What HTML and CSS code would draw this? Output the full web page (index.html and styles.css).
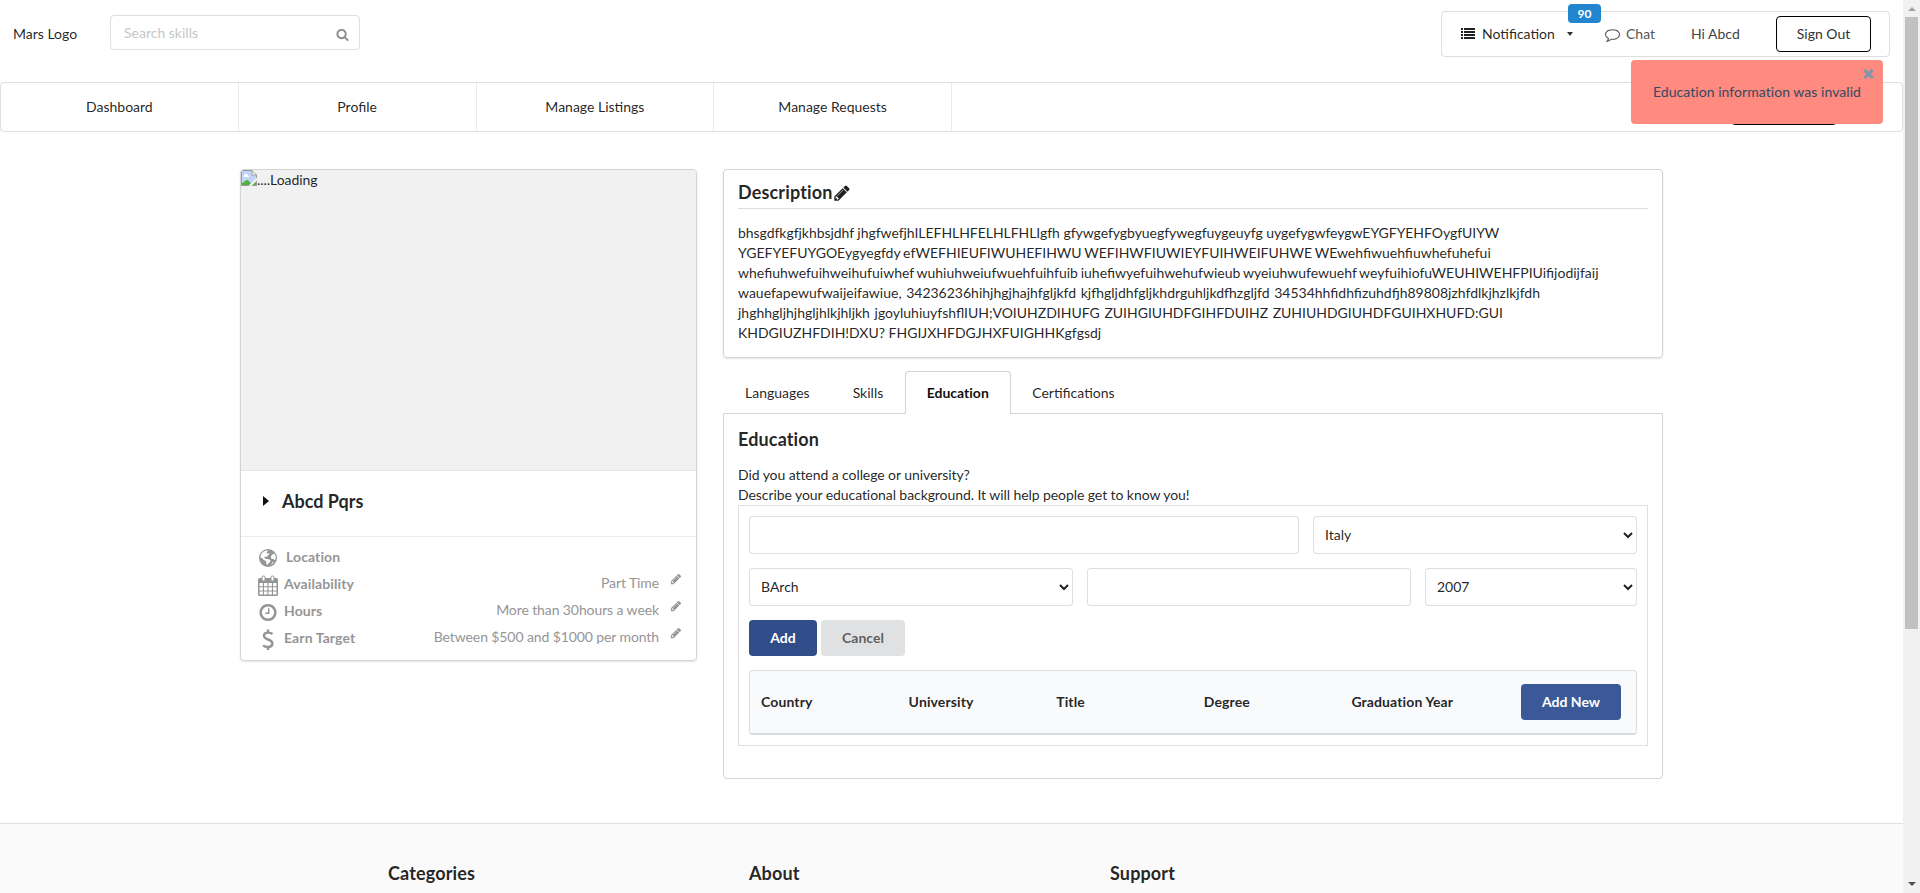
FILE: index.html
```
<!DOCTYPE html>
<html lang="en">
<head>
<meta charset="utf-8">
<title>Profile</title>
<link rel="stylesheet" href="styles.css">
</head>
<body>
<svg class="defs" width="0" height="0">
  <symbol id="pencil" viewBox="0 0 1792 1792"><path d="M491 1536l91-91-235-235-91 91v107h128v128h107zm523-928q0-22-22-22-10 0-17 7l-542 542q-7 7-7 17 0 22 22 22 10 0 17-7l542-542q7-7 7-17zm-54-192l416 416-832 832h-416v-416zm683 96q0 53-37 90l-166 166-416-416 166-165q36-38 90-38 53 0 91 38l235 234q37 39 37 91z"/></symbol>
</svg>
<div class="window">
<div class="page">
  <header class="topbar">
    <span class="logo">Mars Logo</span>
    <div class="search"><span>Search skills</span>
      <svg width="13" height="13" viewBox="0 0 1792 1792"><path d="M1216 832q0-185-131.5-316.5t-316.5-131.5-316.5 131.5-131.5 316.5 131.5 316.5 316.5 131.5 316.5-131.5 131.5-316.5zm512 832q0 52-38 90t-90 38q-54 0-90-38l-343-342q-179 124-399 124-143 0-273.5-55.5t-225-150-150-225-55.5-273.5 55.5-273.5 150-225 225-150 273.5-55.5 273.5 55.5 225 150 150 225 55.5 273.5q0 220-124 399l343 343q37 37 37 90z"/></svg>
    </div>
    <div class="account">
      <div class="notification">
        <svg width="14" height="12" viewBox="0 0 14 12"><path d="M0 0h2v2H0zM3 0h11v2H3zM0 3h2v2H0zM3 3h11v2H3zM0 6h2v2H0zM3 6h11v2H3zM0 9h2v2H0zM3 9h11v2H3z"/></svg>
        <span>Notification</span>
        <i class="caret-down"></i>
        <b class="badge">90</b>
      </div>
      <div class="chat">
        <svg width="15" height="15" viewBox="0 0 1792 1792"><path d="M896 384q-204 0-381.5 69.5t-282 187.5-104.5 255q0 112 71.5 213.5t201.5 175.5l87 50-27 96q-24 91-70 172 152-63 275-171l43-38 57 6q69 8 130 8 204 0 381.5-69.5t282-187.5 104.5-255-104.5-255-282-187.5-381.5-69.5zm896 512q0 174-120 321.5t-326 233-450 85.5q-70 0-145-8-198 175-460 242-49 14-114 22h-5q-15 0-27-10.5t-16-27.5v-1q-3-4-.5-12t2-10 4.5-9.5l6-9 7-8.5 8-9q7-8 31-34.5t34.5-38 31-39.5 32.5-51 27-59 26-76q-157-89-247.5-220t-90.5-281q0-174 120-321.5t326-233 450-85.5 450 85.5 326 233 120 321.5z"/></svg>
        <span>Chat</span>
      </div>
      <span class="greeting">Hi Abcd</span>
      <button class="signout">Sign Out</button>
    </div>
  </header>

  <nav class="nav">
    <a>Dashboard</a><a>Profile</a><a>Manage Listings</a><a>Manage Requests</a>
    <div class="nav-action"></div>
  </nav>

  <main class="content">
    <section class="card profile">
      <div class="photo">
        <svg width="16" height="16" viewBox="0 0 16 16"><path fill="#fff" d="M0 0h11l5 5v11H0z"/><path fill="#c1d3f7" d="M1 1h10v4h4v10H1z"/><path fill="#fff" d="M3 6c0-3 4-3 4 0 2 0 2 1 1 1H3c-1-1-1-1 0-1z"/><path fill="#53b13b" d="M1 15v-2c2 0 3-3 5-3s2 2 4 3l-2 2zM11 15l4-4v4z"/><path fill="none" stroke="#9b9b9b" d="M.5 16V.5h10.500l4.500 4.500V16M0 15.500h16M11 .5V5h4.500"/><path stroke="#f1f1f1" stroke-width="2" d="M8.500 16.500l8-8"/></svg><span>....Loading</span>
      </div>
      <div class="name"><i class="caret-right"></i><h3>Abcd Pqrs</h3></div>
      <ul class="facts">
        <li class="location">
          <svg class="fact-icon" width="20" height="20" viewBox="0 0 20 20"><circle cx="10" cy="10" r="9"/><path fill="#fff" d="M6.300 3.200C3.500 4.600 2.400 7 2.300 9.500l1.700.4 1.800 2 2.200 1.200.3 2.400 1.200 1.700c.6-1 .8-2 2-2.600.5-1 1.300-1.600.8-2.600L9.800 11 7.600 11 6.200 9.400l1.700-1.100 1.200.9.5-1.600 1.800-1.700-.8-.9-1.500.8-.6-1.500 1.800-1.600-1.800-.3zM16.500 5.700l-2.700 1-1 2.200.8 2 2 .1 1 1.200.8-.7c.8-2.200.3-4.400-.9-5.800zM14.500 14.200l-1.600 2.600c1.400-.6 2.500-1.700 3-2.800z"/></svg>
          <b>Location</b>
        </li>
        <li>
          <svg class="fact-icon" width="20" height="22" viewBox="0 0 20 22"><path d="M2 3h16.500q1.500 0 1.500 1.500v15q0 1.500-1.500 1.500h-17Q0 21 0 19.500v-15Q0 3 2 3z"/><path fill="#fff" d="M1.500 8h3.400v3.200H1.500zM6 8h3.400v3.200H6zM10.500 8h3.400v3.200h-3.400zM15 8h3.500v3.200H15zM1.500 12.200h3.400v3.300H1.500zM6 12.200h3.400v3.300H6zM10.500 12.200h3.400v3.300h-3.400zM15 12.200h3.500v3.300H15zM1.500 16.500h3.400v3H1.500zM6 16.500h3.400v3H6zM10.500 16.500h3.400v3h-3.400zM15 16.500h3.500v3H15z"/><rect x="4" y="1" width="3" height="5" rx="1.300" fill="#fff" stroke="#959595"/><rect x="13" y="1" width="3" height="5" rx="1.300" fill="#fff" stroke="#959595"/></svg>
          <b>Availability</b><span>Part Time</span><svg class="edit" width="12" height="12"><use href="#pencil"/></svg>
        </li>
        <li>
          <svg class="fact-icon" width="21" height="21" viewBox="0 0 1792 1792"><path d="M1024 544v448q0 14-9 23t-23 9h-320q-14 0-23-9t-9-23v-64q0-14 9-23t23-9h224v-352q0-14 9-23t23-9h64q14 0 23 9t9 23zm416 352q0-148-73-273t-198-198-273-73-273 73-198 198-73 273 73 273 198 198 273 73 273-73 198-198 73-273zm224 0q0 209-103 385.500t-279.500 279.500-385.500 103-385.500-103-279.500-279.500-103-385.500 103-385.500 279.500-279.500 385.500-103 385.500 103 279.500 279.500 103 385.500z"/></svg>
          <b>Hours</b><span>More than 30hours a week</span><svg class="edit" width="12" height="12"><use href="#pencil"/></svg>
        </li>
        <li>
          <svg class="fact-icon stroked" width="20" height="22" viewBox="0 0 20 22"><path d="M10 .5v3M10 18v3M14.500 5C12 3 6 2.800 6 6.700c0 4.600 8.400 3 8.400 7.800 0 4.300-6.400 4.300-9.400 1.800"/></svg>
          <b>Earn Target</b><span>Between $500 and $1000 per month</span><svg class="edit" width="12" height="12"><use href="#pencil"/></svg>
        </li>
      </ul>
    </section>

    <div class="details">
      <section class="card description">
        <h3>Description<svg width="18" height="18"><use href="#pencil"/></svg></h3>
        <p><span class="snug">bhsgdfkgfjkhbsjdhf jhgfwefjhILEFHLHFELHLFHLIgfh gfywgefygbyuegfywegfuygeuyfg uygefygwfeygwEYGFYEHFOygfUIYW</span><br><span class="close">YGEFYEFUYGOEygyegfdy efWEFHIEUFIWUHEFIHWU WEFIHWFIUWIEYFUIHWEIFUHWE WEwehfiwuehfiuwhefuhefui<br>whefiuhwefuihweihufuiwhef wuhiuhweiufwuehfuihfuib iuhefiwyefuihwehufwieub wyeiuhwufewuehf weyfuihiofuWEUHIWEHFPIUifijodijfaij</span><br><span class="wide">wauefapewufwaijeifawiue, 34236236hihjhgjhajhfgljkfd kjfhgljdhfgljkhdrguhljkdfhzgljfd 34534hhfidhfizuhdfjh89808jzhfdlkjhzlkjfdh<br>jhghhgljhjhgljhlkjhljkh jgoyluhiuyfshflIUH;VOIUHZDIHUFG ZUIHGIUHDFGIHFDUIHZ ZUHIUHDGIUHDFGUIHXHUFD:GUI</span><br>KHDGIUZHFDIH!DXU? FHGIJXHFDGJHXFUIGHHKgfgsdj</p>
      </section>

      <div class="tabs"><a>Languages</a><a>Skills</a><a class="active">Education</a><a>Certifications</a></div>
      <section class="panel">
        <h3>Education</h3>
        <p>Did you attend a college or university?<br>Describe your educational background. It will help people get to know you!</p>
        <div class="form">
          <div class="row row-one">
            <input type="text">
            <select><option>Italy</option></select>
          </div>
          <div class="row row-two">
            <select><option>BArch</option></select>
            <input type="text">
            <select><option>2007</option></select>
          </div>
          <div class="buttons"><button class="btn add">Add</button><button class="btn cancel">Cancel</button></div>
          <div class="table">
            <b>Country</b><b>University</b><b>Title</b><b>Degree</b><b>Graduation Year</b><button class="btn add-new">Add New</button>
          </div>
        </div>
      </section>
    </div>
  </main>

  <footer class="footer"><h3>Categories</h3><h3>About</h3><h3>Support</h3></footer>

  <div class="toast">Education information was invalid
    <svg width="15" height="15" viewBox="0 0 1792 1792"><path d="M1490 1322q0 40-28 68l-136 136q-28 28-68 28t-68-28l-294-294-294 294q-28 28-68 28t-68-28l-136-136q-28-28-28-68t28-68l294-294-294-294q-28-28-28-68t28-68l136-136q28-28 68-28t68 28l294 294 294-294q28-28 68-28t68 28l136 136q28 28 28 68t-28 68l-294 294 294 294q28 28 28 68z"/></svg>
  </div>
</div>
<div class="scrollbar">
  <i class="arrow up"></i>
  <div class="thumb"></div>
  <i class="arrow down"></i>
</div>
</div>
</body>
</html>
```
FILE: styles.css
```
* { box-sizing: border-box; }
body { margin: 0; overflow: hidden; font: 14px/20px Lato, "Liberation Sans", sans-serif; color: rgba(0,0,0,.87); background: #fff; }
h3, p, ul { margin: 0; padding: 0; }
h3 { font-size: 18px; line-height: 23px; font-weight: 700; letter-spacing: .14px; }
button, input, select { font: inherit; color: inherit; }
svg { display: block; flex: none; fill: currentColor; }
.defs { position: absolute; }
.window { display: flex; height: 893px; }
.page { position: relative; flex: 1; min-width: 0; display: flex; flex-direction: column; overflow: hidden; }

.topbar { display: flex; height: 82px; padding: 11px 13px 0 13px; align-items: flex-start; }
.logo { width: 97px; padding-top: 13px; }
.search { display: flex; align-items: center; justify-content: space-between; width: 250px; height: 35px; margin-top: 4px; padding: 0 10px 0 13px; border: 1px solid rgba(34,36,38,.15); border-radius: 4px; color: #c7c7c7; }
.search svg { color: #8c8c8c; margin-top: 4px; }
.account { display: flex; align-items: center; width: 449px; height: 46px; margin-left: auto; padding: 0 18px 0 19px; border: 1px solid rgba(34,36,38,.15); border-radius: 4px; }
.notification { position: relative; display: flex; align-items: center; width: 144px; }
.notification span { margin-left: 7px; }
.caret-down { margin-left: 12px; border: 4px solid transparent; border-top-color: #333; border-bottom: 0; border-left-width: 3.500px; border-right-width: 3.500px; }
.badge { position: absolute; left: 107px; top: -20px; width: 33px; height: 19px; border-radius: 4px; background: #2185d0; color: #fff; font-size: 12px; line-height: 19px; text-align: center; }
.chat { display: flex; align-items: center; gap: 6px; width: 86px; color: #555; }
.greeting { color: #444; }
.signout { width: 95px; height: 36px; margin-left: auto; padding: 0; border: 1px solid #000; border-radius: 4px; background: #fff; color: #333; }

.nav { display: flex; flex: none; height: 50px; border: 1px solid rgba(34,36,38,.15); border-radius: 4px; }
.nav a { width: 237.750px; border-right: 1px solid rgba(34,36,38,.1); line-height: 48px; text-align: center; }
.nav-action { width: 106px; height: 36px; margin: 6px 65px 0 auto; border: 1px solid #000; border-radius: 4px; }

.content { display: flex; gap: 26px; align-items: flex-start; flex: none; height: 691px; padding: 37px 240px 0; }
.card { border: 1px solid #d4d4d5; border-radius: 4px; box-shadow: 0 1px 2px rgba(34,36,38,.12); }
.profile { width: 457px; height: 492px; overflow: hidden; }
.photo { display: flex; height: 301px; background: #f1f1f1; border-bottom: 1px solid #e5e5e5; }
.photo span { letter-spacing: -.05px; }
.name { display: flex; height: 66px; padding: 19px 22px 0; border-bottom: 1px solid #ececec; }
.name h3 { letter-spacing: 0; }
.caret-right { width: 0; height: 0; margin: 6px 13px 0 0; border: 5px solid transparent; border-left: 6px solid #111; border-right: 0; }
.facts { list-style: none; padding: 12px 14px 0 17px; color: #959595; }
.facts li { display: flex; height: 27px; }
.facts b { margin: -2px auto 0 6px; line-height: 20px; font-weight: 700; letter-spacing: .1px; }
.facts .location b { margin-left: 8px; }
.facts span { margin-top: -3px; letter-spacing: -.1px; }
.facts .edit { margin: 0 0 0 11px; }
.facts li .edit { margin-top: -3px; }
.fact-icon { width: 20px; margin-top: -1px; }
.stroked { fill: none; stroke: currentColor; stroke-width: 2.400px; }

.details { flex: 1; min-width: 0; }
.description { height: 189px; padding: 11px 14px; }
.description h3 { display: flex; height: 28px; border-bottom: 1px solid #dcddde; }
.description h3 svg { margin: 3px 0 0 1px; }
.description p { padding-top: 14px; white-space: nowrap; }
.snug { letter-spacing: -.045px; }
.close { word-spacing: -.8px; }
.wide { word-spacing: 1px; }
.tabs { display: flex; height: 43px; margin: 13px 0 -1px; position: relative; }
.tabs a { padding: 0 21.500px; line-height: 43px; }
.tabs a:first-child { padding-left: 22px; }
.tabs .active { width: 106px; padding: 0; border: 1px solid #d4d4d5; border-bottom: 0; border-radius: 4px 4px 0 0; background: #fff; line-height: 41px; text-align: center; font-weight: 700; color: rgba(0,0,0,.95); font-variant-ligatures: none; }
.panel { height: 366px; padding: 14px; border: 1px solid #d4d4d5; border-radius: 0 0 4px 4px; }
.panel p { margin: 14px 0 0; letter-spacing: -.075px; }
.form { height: 241px; padding: 10px; border: 1px solid #e0e0e1; }
.row { display: grid; gap: 14px; margin-bottom: 14px; }
.row-one { grid-template-columns: 550px 324px; }
.row-two { grid-template-columns: 324px 324px 212px; }
.row input, .row select { width: 100%; height: 38px; padding: 0 0 1px 7px; border: 1px solid rgba(34,36,38,.15); border-radius: 4px; background: #fff; outline: 0; }
.buttons { display: flex; gap: 4px; margin-bottom: 14px; }
.btn { height: 36px; padding: 0; border: 0; border-radius: 4px; font-weight: 700; }
.add { width: 68px; background: #304d8a; color: #fff; }
.cancel { width: 84px; background: #e0e1e2; color: rgba(0,0,0,.6); }
.table { display: grid; grid-template-columns: repeat(5, 147.600px) 1fr; align-items: center; height: 65px; padding: 0 15px 0 11px; border: 1px solid #dcddde; border-bottom: 2px solid #d9dadb; border-radius: 4px; background: #f9fafb; letter-spacing: .12px; }
.add-new { width: 100px; justify-self: end; background: #3b5998; color: #fff; }

.footer { flex: 1; display: grid; grid-template-columns: 361px 361px 361px; padding: 38px 388px 0; border-top: 1px solid #e0e0e1; background: #fafafa; }

.toast { position: absolute; left: 1631px; top: 60px; width: 252px; height: 64px; border-radius: 4px; background: #ff8a80; color: #34495e; line-height: 64px; text-align: center; letter-spacing: .05px; }
.toast svg { position: absolute; right: 7px; top: 6px; color: #8296ad; }

.scrollbar { width: 17px; display: flex; flex-direction: column; align-items: center; background: #f1f1f1; }
.thumb { width: 13px; height: 612px; background: #c1c1c1; }
.arrow { border: 4px solid transparent; }
.up { margin: 7px 0 6px; border-bottom-color: #a3a3a3; border-top: 0; }
.down { margin: auto 0 7px; border-top-color: #505050; border-bottom: 0; }
```
